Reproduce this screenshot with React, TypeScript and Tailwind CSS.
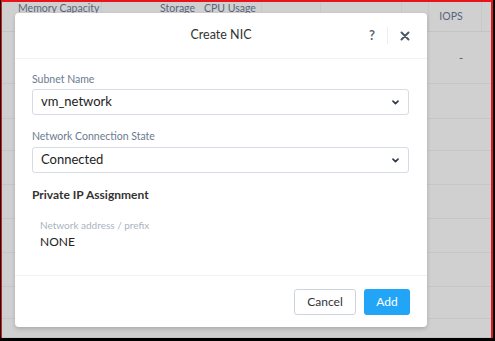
import React from "react";

const rows = [52, 35, 32, 34, 34, 34, 34, 32, 19];

const Chevron = () => (
    <svg width="7" height="5" viewBox="0 0 7 5" className="text-[#2f3b4a]">
        <path d="M1 1.2 L3.5 3.6 L6 1.2" fill="none" stroke="currentColor" strokeWidth="1.7" strokeLinecap="round" strokeLinejoin="round" />
    </svg>
);

const SelectBox = ({ value }: { value: string }) => (
    <div className="h-[26px] w-[377px] rounded-[3px] border border-[#d6dce4] bg-white flex items-center justify-between pl-[8px] pr-[9px]">
        <span className="text-[13px] text-[#222]">{value}</span>
        <Chevron />
    </div>
);

const App = () => {
    return (
        <div className="w-[495px] h-[341px] border-l border-r-2 border-b-[3px] border-black" style={{ fontFamily: "Lato, 'Liberation Sans', sans-serif" }}>
            <div className="relative w-full h-full border-t-2 border-l border-r-2 border-[#e8141c] bg-[#d0d0d0] overflow-hidden">
                {/* table behind the overlay */}
                <div className="flex flex-col">
                    <div className="h-[30px] flex border-b border-[#c4c4c4] text-[10.5px] text-[#56657a] relative">
                        <div className="w-[100px] border-r border-[#c8c8c8]"></div>
                        <div className="w-[160px] border-r border-[#c8c8c8]"></div>
                        <div className="w-[59px] border-r border-[#c8c8c8]"></div>
                        <div className="w-[81px] border-r border-[#c8c8c8]"></div>
                        <div className="w-[27px] border-r border-[#c8c8c8]"></div>
                        <div className="w-[53px] border-r border-[#c8c8c8] flex items-center justify-center pr-[8px]">IOPS</div>
                        <span className="absolute left-[16px] top-[0px] leading-[12px]">Memory Capacity</span>
                        <span className="absolute left-[158px] top-[0px] leading-[12px]">Storage</span>
                        <span className="absolute left-[202px] top-[0px] leading-[12px]">CPU Usage</span>
                    </div>
                    {rows.map((h, i) => (
                        <div key={i} className="flex justify-end border-b border-[#c6c6c6]" style={{ height: h }}>
                            {i === 0 ? <span className="w-[60px] text-[11px] text-[#555] pt-[18px] text-center">-</span> : null}
                        </div>
                    ))}
                </div>

                {/* modal */}
                <div className="absolute left-[13px] top-[11px] w-[412px] h-[314px] bg-white rounded-[4px] shadow-[0_2px_4px_rgba(0,0,0,0.18)] flex flex-col">
                    <div className="h-[46px] border-b border-[#f0f2f4] flex items-center relative">
                        <span className="w-full text-center text-[12.5px] text-[#333]">Create NIC</span>
                        <div className="absolute right-[17px] top-0 h-full flex items-center">
                            <span className="text-[13px] font-bold text-[#5a6878] w-[16px] text-center">?</span>
                            <div className="w-px h-[17px] bg-[#eceef0] ml-[7px] mr-[12px]"></div>
                            <svg width="10" height="10" viewBox="0 0 10 10" className="text-[#4d5a6a]">
                                <path d="M1.5 1.5 L8.5 8.5 M8.5 1.5 L1.5 8.5" stroke="currentColor" strokeWidth="2" strokeLinecap="round" />
                            </svg>
                        </div>
                    </div>
                    <div className="flex-1 flex flex-col pl-[17px] pt-[14px]">
                        <span className="text-[10.5px] leading-[12px] text-[#6a7b90]">Subnet Name</span>
                        <div className="mt-[4px]"><SelectBox value="vm_network" /></div>
                        <span className="mt-[15px] text-[10.5px] leading-[12px] text-[#6a7b90]">Network Connection State</span>
                        <div className="mt-[5px]"><SelectBox value="Connected" /></div>
                        <span className="mt-[14px] text-[12px] leading-[16px] font-bold text-[#333]">Private IP Assignment</span>
                        <div className="pl-[8px] flex flex-col">
                            <span className="mt-[16px] text-[10px] leading-[12px] text-[#aab4c0]">Network address / prefix</span>
                            <span className="mt-[3px] text-[12px] leading-[16px] text-[#222]">NONE</span>
                        </div>
                    </div>
                    <div className="h-[52px] border-t border-[#f0f2f4] flex items-center justify-end gap-[8px] pr-[17px]">
                        <button className="h-[26px] w-[62px] rounded-[3px] border border-[#cdd4dc] bg-white text-[12px] text-[#333]">Cancel</button>
                        <button className="h-[26px] w-[46px] rounded-[3px] bg-[#22a5f6] text-[12px] text-white">Add</button>
                    </div>
                </div>
            </div>
        </div>
    );
};

export default App;
